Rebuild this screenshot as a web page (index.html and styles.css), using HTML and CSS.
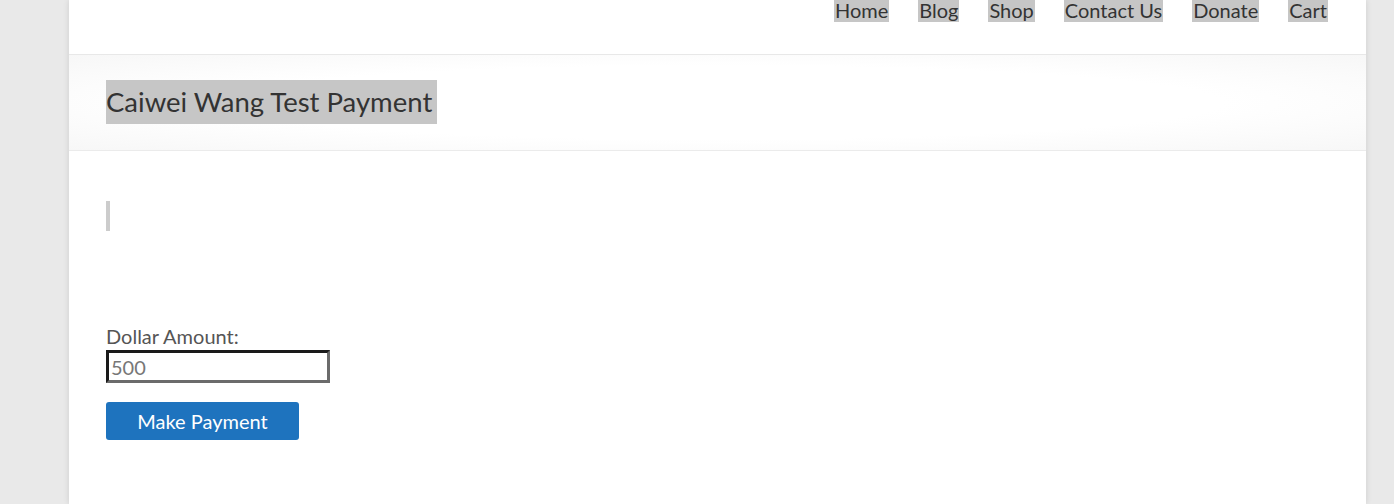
FILE: index.html
```html
<!DOCTYPE html>
<html>
<head>
<meta charset="utf-8">
<link rel="stylesheet" href="styles.css">
</head>
<body>
<div class="page">
  <header class="site-header">
    <nav class="nav">
      <a class="nav-link">Home</a>
      <a class="nav-link">Blog</a>
      <a class="nav-link">Shop</a>
      <a class="nav-link">Contact Us</a>
      <a class="nav-link">Donate</a>
      <a class="nav-link">Cart</a>
    </nav>
  </header>
  <div class="title-band">
    <h1 class="page-title"><span class="sel">Caiwei Wang Test Payment</span></h1>
  </div>
  <main class="content">
    <blockquote class="quote"></blockquote>
    <form class="pay-form">
      <label class="field-label">Dollar Amount:</label>
      <input class="amount" type="text" value="500">
      <button class="pay-btn" type="button">Make Payment</button>
    </form>
  </main>
</div>
</body>
</html>
```
FILE: styles.css
```css
html, body {
  margin: 0;
  padding: 0;
}
body {
  background: #e9e9e9;
  font-family: Lato, "Open Sans", sans-serif;
  color: #555;
  height: 504px;
  overflow: hidden;
}
.page {
  width: 1297px;
  margin-left: 69px;
  background: #fff;
  min-height: 504px;
  box-shadow: 0 0 6px rgba(0,0,0,0.12);
}
.site-header {
  height: 54px;
  border-bottom: 1px solid #e8e8e8;
  padding: 0 38px;
}
.nav {
  display: flex;
  justify-content: flex-end;
  gap: 29px;
}
.nav-link {
  font-size: 20px;
  line-height: 20px;
  height: 22px;
  box-sizing: border-box;
  padding: 0 1px 2px;
  color: #333;
  background: #c6c6c6;
}
.title-band {
  height: 96px;
  box-sizing: border-box;
  padding: 25px 37px 0;
  border-bottom: 1px solid #ebebeb;
  background: radial-gradient(ellipse at center, #ffffff 55%, #f7f7f7 100%);
}
.page-title {
  margin: 0;
  font-weight: 400;
  font-size: 27.5px;
  line-height: 44px;
}
.sel {
  display: inline-block;
  background: #c6c6c6;
  color: #333;
  padding-right: 5px;
}
.content {
  padding: 50px 37px 0;
}
.quote {
  margin: 0;
  height: 30px;
  border-left: 4px solid #ccc;
}
.pay-form {
  margin-top: 93px;
  display: flex;
  flex-direction: column;
  align-items: flex-start;
}
.field-label {
  font-size: 20px;
  line-height: 24px;
  color: #555;
  margin-bottom: 2px;
}
.amount {
  width: 224px;
  height: 33px;
  box-sizing: border-box;
  border-style: solid;
  border-width: 3px;
  border-top-color: #1a1a1a;
  border-left-color: #1a1a1a;
  border-right-color: #6b6b6b;
  border-bottom-color: #6b6b6b;
  font-family: Lato, sans-serif;
  font-size: 20px;
  color: #777;
  padding: 0 2px;
  margin: 0;
  outline: none;
}
.pay-btn {
  margin-top: 19px;
  width: 193px;
  height: 38px;
  background: #1e73be;
  color: #fff;
  border: none;
  border-radius: 3px;
  font-family: Lato, sans-serif;
  font-size: 20px;
  padding: 0;
}
```
